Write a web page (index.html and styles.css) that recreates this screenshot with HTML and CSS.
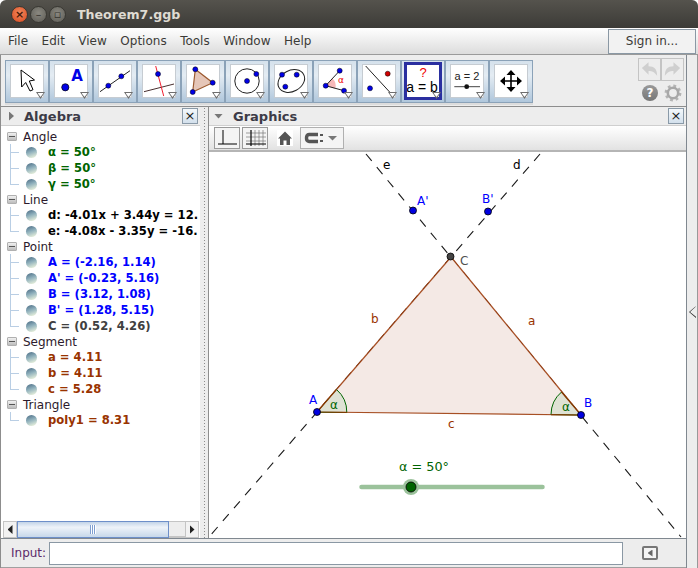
FILE: index.html
```html
<!DOCTYPE html>
<html lang="en">
<head>
    <meta charset="UTF-8">
    <meta name="viewport" content="width=device-width, initial-scale=1.0">
    <title>Theorem7.ggb</title>
    <link rel="stylesheet" href="styles.css">
</head>
<body>
<div class="window">
    <div class="titlebar">
        <span class="wbtn wbtn-close">×</span>
        <span class="wbtn">–</span>
        <span class="wbtn">▫</span>
        <span class="title">Theorem7.ggb</span>
    </div>

    <div class="menubar">
        <span class="menu">File</span>
        <span class="menu">Edit</span>
        <span class="menu">View</span>
        <span class="menu">Options</span>
        <span class="menu">Tools</span>
        <span class="menu">Window</span>
        <span class="menu">Help</span>
        <button class="signin">Sign in...</button>
    </div>

    <div class="body">
        <div class="main">
            <!-- main toolbar -->
            <div class="toolrow">
                <div class="tools">
                    <div class="tool"><svg class="ico" viewBox="0 0 32 32"><polygon points="10,5 10.7,22 14.7,17.5 19,26 22,24.7 18.3,16 23.5,15" fill="#fff" stroke="#000" stroke-width="1"/></svg></div>
                    <div class="tool"><svg class="ico" viewBox="0 0 32 32"><circle cx="10.3" cy="22.3" r="3.6" fill="#0000e6" stroke="#000" stroke-width=".7"/><text x="22" y="16" class="ic-a">A</text></svg></div>
                    <div class="tool"><svg class="ico" viewBox="0 0 32 32"><line x1="1" y1="26.7" x2="31" y2="5.7" stroke="#222"/><circle cx="9.3" cy="20.7" r="2.5" class="pt"/><circle cx="22.3" cy="11.3" r="2.5" class="pt"/></svg></div>
                    <div class="tool"><svg class="ico" viewBox="0 0 32 32"><line x1="1" y1="26.7" x2="31" y2="19" stroke="#4a3030"/><line x1="12.7" y1="1" x2="20.7" y2="31" stroke="#f02030"/><circle cx="15" cy="9" r="2.5" class="pt"/></svg></div>
                    <div class="tool"><svg class="ico" viewBox="0 0 32 32"><polygon points="8.3,4.3 25.7,17.7 5.7,27" fill="#e5c6b8" stroke="#9c5a30" stroke-width="1.2"/><circle cx="8.3" cy="4.3" r="2.5" class="pt"/><circle cx="25.7" cy="17.7" r="2.5" class="pt"/><circle cx="5.7" cy="27" r="2.5" class="pt"/></svg></div>
                    <div class="tool"><svg class="ico" viewBox="0 0 32 32"><circle cx="16" cy="16" r="12.2" fill="none" stroke="#222"/><circle cx="16" cy="16" r="2.5" class="pt"/><circle cx="25.3" cy="9" r="2.5" class="pt"/></svg></div>
                    <div class="tool"><svg class="ico" viewBox="0 0 32 32"><ellipse cx="16.3" cy="16" rx="14" ry="10.5" transform="rotate(-28 16.3 16)" fill="none" stroke="#222"/><circle cx="7" cy="9.7" r="2.5" class="pt"/><circle cx="21.7" cy="9.7" r="2.5" class="pt"/><circle cx="10.3" cy="21.7" r="2.5" class="pt"/></svg></div>
                    <div class="tool"><svg class="ico" viewBox="0 0 32 32"><path d="M6.7 20.7 L13.5 13.5 A10 10 0 0 1 16.2 23.7 Z" fill="#f7b9b9"/><line x1="6.7" y1="20.7" x2="20.7" y2="5.7" stroke="#222"/><line x1="6.7" y1="20.7" x2="25" y2="25.7" stroke="#222"/><circle cx="6.7" cy="20.7" r="2.5" class="pt"/><circle cx="20.7" cy="5.7" r="2.5" class="pt"/><circle cx="25" cy="25.7" r="2.5" class="pt"/><text x="19" y="18" class="ic-alpha">α</text></svg></div>
                    <div class="tool"><svg class="ico" viewBox="0 0 32 32"><line x1="2.7" y1="1" x2="30" y2="30.7" stroke="#222"/><circle cx="24.7" cy="8.7" r="2.5" fill="#d00000" stroke="#000" stroke-width=".5"/><circle cx="7" cy="23.3" r="2.5" class="pt"/></svg></div>
                    <div class="tool tool-on"><svg class="ico" viewBox="0 0 32 32"><text x="16" y="12" class="ic-q">?</text><text x="15" y="27" class="ic-eq">a = b</text></svg></div>
                    <div class="tool"><svg class="ico" viewBox="0 0 32 32"><text x="16" y="15" class="ic-val">a = 2</text><line x1="3.3" y1="21.7" x2="29" y2="21.7" stroke="#444"/><circle cx="15.7" cy="21.7" r="2.4" fill="#111"/></svg></div>
                    <div class="tool"><svg class="ico" viewBox="0 0 32 32"><path d="M15.200 8h1.600v7.200h7.200v1.600h-7.200v7.200h-1.600v-7.200H8v-1.600h7.200z" fill="#000"/><path d="M16 5 20.500 10H11.500zM16 27 20.500 22H11.500zM5 16 10 11.500V20.500zM27 16 22 11.500V20.500z" fill="#000"/></svg></div>
                </div>
                <div class="toolside">
                    <div class="undo">
                        <span class="undobtn"><svg width="22" height="20" viewBox="0 0 22 20"><path d="M3 8 10 2V6C16 6 19 9 19 16 16 12 14 11 10 11V15Z" fill="#cfcfcf"/></svg></span>
                        <span class="undobtn"><svg width="22" height="20" viewBox="0 0 22 20"><path d="M19 8 12 2V6C6 6 3 9 3 16 6 12 8 11 12 11V15Z" fill="#cfcfcf"/></svg></span>
                    </div>
                    <div class="helprow">
                        <span class="help">?</span>
                        <svg width="18" height="18" viewBox="0 0 18 18"><circle cx="9" cy="9" r="6.6" fill="none" stroke="#b4b4b4" stroke-width="3.6" stroke-dasharray="2.6 2.6"/><circle cx="9" cy="9" r="5.2" fill="none" stroke="#a8a8a8" stroke-width="2.6"/><circle cx="9" cy="9" r="2.6" fill="#eee"/></svg>
                    </div>
                </div>
            </div>

            <div class="panes">
                <!-- algebra view -->
                <div class="algebra">
                    <div class="phead">
                        <span class="arrow-right"></span>
                        <span class="ptitle">Algebra</span>
                        <span class="pclose">×</span>
                    </div>
                    <div class="tree">
                        <div class="group"><span class="minus"></span>Angle</div>
                        <div class="leaf c-green"><span class="ball"></span>α = 50°</div>
                        <div class="leaf c-green"><span class="ball"></span>β = 50°</div>
                        <div class="leaf last c-green"><span class="ball"></span>γ = 50°</div>
                        <div class="group"><span class="minus"></span>Line</div>
                        <div class="leaf c-black"><span class="ball"></span>d: -4.01x + 3.44y = 12.</div>
                        <div class="leaf last c-black"><span class="ball"></span>e: -4.08x - 3.35y = -16.</div>
                        <div class="group"><span class="minus"></span>Point</div>
                        <div class="leaf c-blue"><span class="ball"></span>A = (-2.16, 1.14)</div>
                        <div class="leaf c-blue"><span class="ball"></span>A' = (-0.23, 5.16)</div>
                        <div class="leaf c-blue"><span class="ball"></span>B = (3.12, 1.08)</div>
                        <div class="leaf c-blue"><span class="ball"></span>B' = (1.28, 5.15)</div>
                        <div class="leaf last c-grey"><span class="ball"></span>C = (0.52, 4.26)</div>
                        <div class="group"><span class="minus"></span>Segment</div>
                        <div class="leaf c-brown"><span class="ball"></span>a = 4.11</div>
                        <div class="leaf c-brown"><span class="ball"></span>b = 4.11</div>
                        <div class="leaf last c-brown"><span class="ball"></span>c = 5.28</div>
                        <div class="group"><span class="minus"></span>Triangle</div>
                        <div class="leaf last c-brown"><span class="ball"></span>poly1 = 8.31</div>
                    </div>
                    <div class="hscroll">
                        <span class="sbtn"><span class="tri-l"></span></span>
                        <span class="thumb"><span class="grip"></span></span>
                        <span class="strack"></span>
                        <span class="sbtn"><span class="tri-r"></span></span>
                    </div>
                </div>

                <div class="divider"></div>

                <!-- graphics view -->
                <div class="graphics">
                    <div class="phead">
                        <span class="arrow-down"></span>
                        <span class="ptitle">Graphics</span>
                        <span class="pclose">×</span>
                    </div>
                    <div class="gbar">
                        <span class="gbtn"><svg width="24" height="20" viewBox="0 0 24 20"><path d="M8 2V16M3 16H22" stroke="#000" fill="none"/></svg></span>
                        <span class="gbtn"><svg width="24" height="20" viewBox="0 0 24 20"><path d="M8 2V18M12 2V18M16 2V18M20 2V18M3 5H23M3 9H23M3 13H23" stroke="#777" fill="none" stroke-width=".7"/><path d="M8 2V18M3 16H23" stroke="#000" fill="none"/></svg></span>
                        <span class="ghome"><svg width="16" height="16" viewBox="0 0 16 16"><path d="M8 1.5 15 8.5H13V15H9.5V10.5H6.5V15H3V8.5H1Z" fill="#555"/></svg></span>
                        <span class="gdrop"><svg width="40" height="18" viewBox="0 0 40 18"><path d="M17 5.5H8C6 5.5 5.5 7 5.5 9S6 12.5 8 12.5H17" stroke="#555" stroke-width="3.4" fill="none"/><path d="M19 6H22M19 12H22" stroke="#555" stroke-width="2"/><path d="M27 7H36L31.500 11.500Z" fill="#777"/></svg></span>
                    </div>
                    <svg class="canvas" viewBox="209 152 477 386">
                        <g class="dash">
                            <line x1="366" y1="154" x2="681" y2="537"/>
                            <line x1="540" y1="154" x2="209" y2="537"/>
                        </g>
                        <polygon points="317,412 451,257 581,415" fill="#f4e9e5"/>
                        <g class="side">
                            <line x1="317" y1="412" x2="451" y2="257"/>
                            <line x1="451" y1="257" x2="581" y2="415"/>
                            <line x1="317" y1="412" x2="581" y2="415"/>
                        </g>
                        <path d="M317 412.200 L336.500 389.500 A30 30 0 0 1 346.800 412.500 Z" class="wedge"/>
                        <path d="M581 415 L551 414.600 A30 30 0 0 1 561.500 392 Z" class="wedge"/>
                        <line x1="317" y1="412" x2="336.500" y2="389.500" class="side-line"/>
                        <line x1="581" y1="415" x2="561.500" y2="392" class="side-line"/>
                        <line x1="317" y1="412" x2="346.800" y2="412.400" class="side-line"/>
                        <line x1="581" y1="415" x2="551" y2="414.600" class="side-line"/>

                        <circle cx="317" cy="412" r="3.500" class="dot"/>
                        <circle cx="581" cy="415" r="3.500" class="dot"/>
                        <circle cx="413" cy="210.500" r="3.500" class="dot"/>
                        <circle cx="488" cy="211.500" r="3.500" class="dot"/>
                        <circle cx="450.500" cy="256.500" r="3.500" fill="#444" stroke="#000" stroke-width=".8"/>

                        <text x="309" y="404" class="lbl l-blue">A</text>
                        <text x="584" y="407" class="lbl l-blue">B</text>
                        <text x="417" y="205" class="lbl l-blue">A'</text>
                        <text x="482" y="203" class="lbl l-blue">B'</text>
                        <text x="460" y="265" class="lbl l-grey">C</text>
                        <text x="383" y="169" class="lbl l-black">e</text>
                        <text x="513" y="169" class="lbl l-black">d</text>
                        <text x="371" y="323" class="lbl l-brown">b</text>
                        <text x="528" y="325" class="lbl l-brown">a</text>
                        <text x="448" y="428" class="lbl l-brown">c</text>
                        <text x="330" y="409" class="lbl l-green">α</text>
                        <text x="562" y="411" class="lbl l-green">α</text>
                        <text x="399" y="471" class="lbl-big l-green">α = 50°</text>

                        <line x1="361.500" y1="487" x2="542.500" y2="487" class="slider"/>
                        <circle cx="411" cy="487" r="8" fill="#9bc29b"/>
                        <circle cx="411" cy="487" r="5" fill="#006400" stroke="#000" stroke-width=".8"/>
                    </svg>
                </div>
            </div>

            <div class="inputbar">
                <label class="inputlabel" for="cmd">Input:</label>
                <input class="cmd" id="cmd" type="text">
                <span class="inbtn"><span class="tri-in"></span></span>
            </div>
        </div>

        <div class="strip"><span class="strip-arrow"></span></div>
    </div>
</div>
</body>
</html>
```

FILE: styles.css
```css
* {
    box-sizing: border-box;
}
html, body {
    margin: 0;
    padding: 0;
    background-color: #fff;
}
.window {
    width: 698px;
    height: 568px;
    font-family: "DejaVu Sans", sans-serif;
    font-size: 12px;
    color: #3c3b37;
    background-color: #ededed;
    overflow: hidden;
    border-radius: 6px 6px 0 0;
    display: flex;
    flex-direction: column;
}

/* title bar */
.titlebar {
    height: 28px;
    flex: none;
    display: flex;
    align-items: center;
    padding-left: 11px;
    gap: 2px;
    background: linear-gradient(#55534d, #3c3b37);
}
.wbtn {
    width: 17px;
    height: 17px;
    border-radius: 50%;
    background: radial-gradient(circle at 50% 40%, #8a8880, #5c5b55);
    color: #35342f;
    font-size: 11px;
    line-height: 16px;
    text-align: center;
    border: 1px solid #393833;
}
.wbtn-close {
    background: radial-gradient(circle at 50% 40%, #f28a5e, #d8481f);
    color: #4a1a08;
    font-weight: bold;
}
.title {
    margin-left: 9px;
    font-size: 12.600px;
    font-weight: bold;
    color: #dfdbd2;
}

/* menu */
.menubar {
    height: 27px;
    flex: none;
    display: flex;
    align-items: center;
    padding-left: 8px;
    gap: 13.500px;
    background: linear-gradient(#fff, #dcdcdc);
    border-bottom: 1px solid #9a9a9a;
}
.signin {
    margin-left: auto;
    margin-right: 2px;
    width: 88px;
    height: 25px;
    font-family: inherit;
    font-size: 12px;
    color: #3c3b37;
    background-color: #f2f2f2;
    border: 1px solid #8a98a4;
}

.body {
    flex: 1;
    display: flex;
    min-height: 0;
}
.main {
    width: 687px;
    display: flex;
    flex-direction: column;
    border-right: 1px solid #808890;
    border-left: 1px solid #8d8d8d;
}
.strip {
    flex: 1;
    display: flex;
    flex-direction: column;
    padding-top: 251px;
    padding-left: 2px;
    border-right: 1px solid #999;
}
.strip-arrow {
    width: 7px;
    height: 12px;
    background-color: #333;
    clip-path: polygon(100% 0, 0 50%, 100% 100%, 100% 90%, 15% 50%, 88% 10%);
}

/* toolbar */
.toolrow {
    height: 52px;
    flex: none;
    display: flex;
    justify-content: space-between;
    padding: 5px 2px 0 4px;
    border-bottom: 1px solid #8d8d8d;
}
.tools {
    display: flex;
    height: 45px;
    border-bottom: 2px solid #dcdcdc;
}
.tool {
    position: relative;
    width: 44px;
    height: 43px;
    padding: 4px 0 0 6px;
    background: linear-gradient(#d5e1ec, #e4ecf3 35%, #b0c7dc);
    border: 1px solid #8ba2b8;
}
.tool::before, .tool::after {
    content: "";
    position: absolute;
    clip-path: polygon(0 0, 100% 0, 50% 100%);
}
.tool::before {
    right: 3px;
    bottom: 3px;
    width: 9px;
    height: 7px;
    background-color: #6e6e6e;
}
.tool::after {
    right: 4.500px;
    bottom: 5px;
    width: 6px;
    height: 4px;
    background-color: #fff;
}
.ico {
    display: block;
    width: 32px;
    height: 32px;
    margin-left: -1px;
    background-color: #fff;
    box-shadow: 0 0 0 1px #c6ccd2;
}
.tool-on .ico {
    box-shadow: 0 0 0 3px #2a2fa0;
}
.pt {
    fill: #0000e6;
    stroke: #000;
    stroke-width: .5;
}
.ic-a {
    font-family: "DejaVu Sans", sans-serif;
    font-size: 15px;
    font-weight: bold;
    fill: #0000e6;
    text-anchor: middle;
}
.ic-alpha {
    font-size: 9px;
    fill: #f00000;
}
.ic-q {
    font-family: "Liberation Sans", sans-serif;
    font-size: 13px;
    fill: #f00000;
    text-anchor: middle;
}
.ic-eq {
    font-family: "Liberation Sans", sans-serif;
    font-size: 14px;
    fill: #000;
    text-anchor: middle;
}
.ic-val {
    font-family: "Liberation Sans", sans-serif;
    font-size: 11px;
    fill: #222;
    text-anchor: middle;
}
.toolside {
    display: flex;
    flex-direction: column;
    align-items: flex-end;
    width: 48px;
    margin-top: -2px;
}
.undo {
    display: flex;
}
.undobtn {
    width: 23px;
    height: 23px;
    border: 1px solid #c4c4c4;
    display: flex;
    align-items: center;
    justify-content: center;
}
.helprow {
    display: flex;
    align-items: center;
    gap: 6px;
    margin-top: 3px;
    margin-right: 2px;
}
.help {
    width: 16px;
    height: 16px;
    border-radius: 50%;
    background: linear-gradient(#999, #777);
    color: #fff;
    font-weight: bold;
    font-size: 12px;
    line-height: 16px;
    text-align: center;
}

/* panes */
.panes {
    flex: 1;
    display: flex;
    min-height: 0;
}
.algebra {
    width: 199px;
    flex: none;
    display: flex;
    flex-direction: column;
    background-color: #fff;
}
.divider {
    width: 9px;
    flex: none;
    background-color: #ededed;
    background-image: radial-gradient(circle, #8c8c8c 0.6px, transparent 0.8px);
    background-size: 3px 3px;
    background-position: 3px 0;
    background-repeat: repeat-y;
    border-right: 1px solid #8d8d8d;
}
.graphics {
    flex: 1;
    display: flex;
    flex-direction: column;
    min-width: 0;
}
.phead {
    height: 19px;
    flex: none;
    display: flex;
    align-items: center;
    background-color: #ededed;
    padding: 0 2px 0 8px;
    border-bottom: 1px solid #cfcfcf;
}
.ptitle {
    font-size: 13px;
    font-weight: bold;
    color: #3c3b47;
    margin-left: 10px;
}
.graphics .phead {
    padding-left: 5px;
}
.arrow-right {
    width: 5px;
    height: 9px;
    background-color: #777;
    clip-path: polygon(0 0, 100% 50%, 0 100%);
}
.arrow-down {
    width: 9px;
    height: 5px;
    background-color: #777;
    clip-path: polygon(0 0, 100% 0, 50% 100%);
}
.pclose {
    margin-left: auto;
    width: 16px;
    height: 16px;
    font-size: 13px;
    line-height: 14px;
    text-align: center;
    color: #222;
    background: linear-gradient(#f4f8fb, #d3e0ec);
    border: 1px solid #8a9aa8;
}

/* algebra tree */
.tree {
    flex: 1;
    overflow: hidden;
    padding-top: 3px;
    background-color: #fff;
    white-space: nowrap;
}
.group {
    height: 15px;
    display: flex;
    align-items: center;
    padding-left: 6px;
    color: #2c1a2c;
}
.minus {
    width: 10px;
    height: 9px;
    margin-right: 6px;
    border-radius: 1px;
    background: linear-gradient(#555, #555) center / 6px 1px no-repeat, linear-gradient(#f0f0f0, #bdbdbd);
    border: 1px solid #b0b0b0;
}
.leaf {
    height: 16px;
    display: flex;
    align-items: center;
    font-size: 11.600px;
    font-weight: bold;
    padding-left: 25px;
    background-image: linear-gradient(#b9cee4, #b9cee4), linear-gradient(#b9cee4, #b9cee4);
    background-repeat: no-repeat;
    background-position: 9px 0, 9px 8px;
    background-size: 1px 100%, 9px 1px;
}
.leaf.last {
    background-size: 1px 9px, 9px 1px;
}
.ball {
    width: 11px;
    height: 11px;
    flex: none;
    margin-right: 11px;
    border-radius: 50%;
    background: linear-gradient(160deg, #4f7088 5%, #8fb0bc 45%, #e6efdc 90%);
}
.c-green { color: #006400; }
.c-black { color: #000; }
.c-blue { color: #0000ff; }
.c-grey { color: #404040; }
.c-brown { color: #993300; }

/* scrollbar */
.hscroll {
    height: 17px;
    flex: none;
    display: flex;
    margin: 0 1px 0 2px;
    background-color: #ededed;
}
.sbtn {
    width: 14px;
    display: flex;
    align-items: center;
    justify-content: center;
    border: 1px solid #c4c4c4;
    background-color: #f2f2f2;
}
.tri-l, .tri-r {
    width: 5px;
    height: 9px;
    background-color: #222;
}
.tri-l { clip-path: polygon(100% 0, 0 50%, 100% 100%); }
.tri-r { clip-path: polygon(0 0, 100% 50%, 0 100%); }
.thumb {
    width: 152px;
    display: flex;
    align-items: center;
    justify-content: center;
    background: linear-gradient(#c3d4e8, #eef3f9 35%, #c7d8ea);
    border: 1px solid #6d8fc9;
}
.grip {
    width: 6px;
    height: 9px;
    background: repeating-linear-gradient(90deg, #7f9fd0 0 1px, #fff 1px 2px);
}
.strack {
    flex: 1;
    border-bottom: 2px solid #c4c4c4;
    border-top: 1px solid #c4c4c4;
}

/* graphics */
.gbar {
    height: 26px;
    flex: none;
    display: flex;
    align-items: center;
    padding-left: 5px;
    gap: 2px;
    background: linear-gradient(#fff, #e2e2e2);
    border-bottom: 2px solid #b5b5b5;
}
.gbtn {
    width: 26px;
    height: 22px;
    border: 1px solid #9a9a9a;
    background-color: #f4f4f4;
    display: flex;
    align-items: center;
    justify-content: center;
}
.ghome {
    margin: 0 5px 0 7px;
    display: flex;
    background-color: #fff;
}
.gdrop {
    width: 44px;
    height: 22px;
    display: flex;
    align-items: center;
    border: 1px solid #b0b0b0;
    background-color: #f4f4f4;
}
.canvas {
    flex: 1;
    width: 100%;
    min-height: 0;
    display: block;
    background-color: #fff;
    font-family: "DejaVu Sans", sans-serif;
}
.dash line {
    stroke: #1a1a1a;
    stroke-width: 1.100;
    stroke-dasharray: 9 8;
}
.side line, .side-line {
    stroke: #993300;
    stroke-width: 1.200;
    stroke-opacity: .85;
}
.wedge {
    fill: #dfe2d4;
    stroke: #006400;
    stroke-width: 1;
}
.dot {
    fill: #0000e0;
    stroke: #000;
    stroke-width: .8;
}
.lbl { font-size: 12px; }
.lbl-big { font-size: 12.800px; }
.l-blue { fill: #0000ff; }
.l-grey { fill: #505050; }
.l-black { fill: #000; }
.l-brown { fill: #993300; }
.l-green { fill: #006400; }
.slider {
    stroke: #9bc29b;
    stroke-width: 4.500;
    stroke-linecap: round;
}

/* input */
.inputbar {
    height: 30px;
    flex: none;
    display: flex;
    align-items: center;
    padding: 0 0 0 10px;
    border-top: 1px solid #808890;
    border-bottom: 1px solid #a0a0a0;
}
.inputlabel {
    width: 38px;
    color: #5c2a6a;
}
.cmd {
    width: 574px;
    height: 23px;
    padding: 0;
    border: 1px solid #8a98a4;
    background-color: #fff;
    outline: none;
}
.inbtn {
    width: 16px;
    height: 14px;
    margin-left: 19px;
    display: flex;
    align-items: center;
    justify-content: center;
    border: 2px solid #777;
    border-radius: 2px;
    background-color: #f4f4f4;
}
.tri-in {
    width: 5px;
    height: 7px;
    background-color: #666;
    clip-path: polygon(100% 0, 0 50%, 100% 100%);
}
```
